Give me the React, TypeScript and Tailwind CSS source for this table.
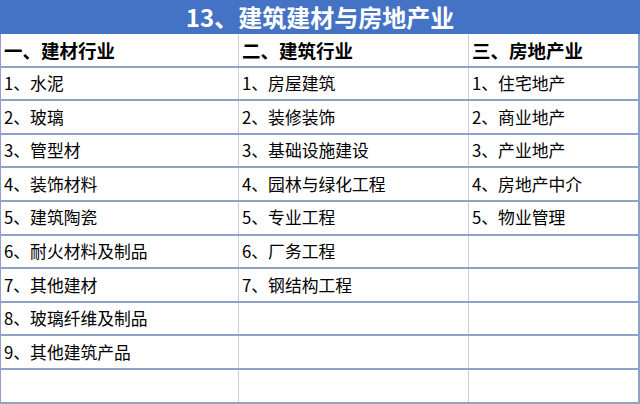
const columns = [
  {
    title: "一、建材行业",
    items: ["1、水泥", "2、玻璃", "3、管型材", "4、装饰材料", "5、建筑陶瓷", "6、耐火材料及制品", "7、其他建材", "8、玻璃纤维及制品", "9、其他建筑产品", ""],
  },
  {
    title: "二、建筑行业",
    items: ["1、房屋建筑", "2、装修装饰", "3、基础设施建设", "4、园林与绿化工程", "5、专业工程", "6、厂务工程", "7、钢结构工程", "", "", ""],
  },
  {
    title: "三、房地产业",
    items: ["1、住宅地产", "2、商业地产", "3、产业地产", "4、房地产中介", "5、物业管理", "", "", "", "", ""],
  },
];

const widths = ["w-[238px]", "w-[230px]", "flex-1"];

export default function App() {
  const rows = [columns.map((c) => c.title), ...columns[0].items.map((_, i) => columns.map((c) => c.items[i]))];

  return (
    <div className="w-[640px] h-[404px] overflow-hidden bg-white font-['Noto_Sans_CJK_SC',sans-serif] text-black">
      <div className="h-[34px] bg-[#4472c4] text-white text-[24px] font-bold flex items-center justify-center leading-none">
        13、建筑建材与房地产业
      </div>
      <div className="border-l border-r-2 border-[#8ea2c8]">
        {rows.map((row, r) => (
          <div key={r} className="flex h-[33.6px] border-b-2 border-[#8ea2c8]">
            {row.map((cell, c) => (
              <div
                key={c}
                className={`${widths[c]} ${c < 2 ? "border-r border-[#c5d0e3]" : ""} flex items-center pl-[3px] leading-none ${
                  r === 0 ? "text-[18.5px] font-bold" : "text-[16.8px]"
                }`}
              >
                {cell}
              </div>
            ))}
          </div>
        ))}
      </div>
    </div>
  );
}
